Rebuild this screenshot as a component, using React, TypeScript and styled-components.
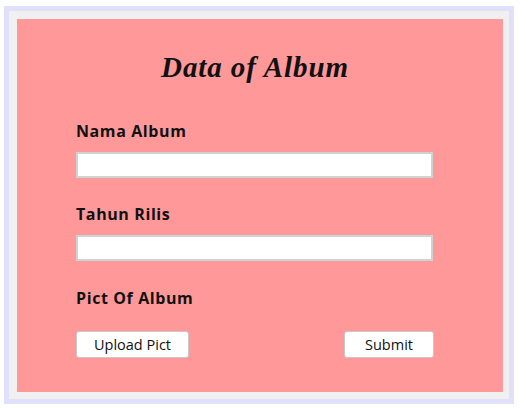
import React from "react";
import styled, { createGlobalStyle } from "styled-components";

const Global = createGlobalStyle`
  html, body { margin: 0; padding: 0; background: #ffffff; }
  body { font-family: "Open Sans", "Noto Sans", sans-serif; }
  * { box-sizing: border-box; }
`;

const Frame = styled.div`
  margin: 6px 7px 4px 4px;
  width: 510px;
  border: 5px solid #e0e0fa;
  background: #f0f0f0;
  padding: 8px 6px 7px 8px;
`;

const Panel = styled.form`
  background: #ff9999;
  height: 373px;
  padding: 32px 69px 0 59px;
  display: flex;
  flex-direction: column;
`;

const Title = styled.h1`
  margin: 0 0 38px 0;
  font-family: "Liberation Serif", "Times New Roman", serif;
  font-style: italic;
  font-weight: bold;
  font-size: 29px;
  line-height: 32px;
  letter-spacing: 0.9px;
  text-align: center;
  color: #111;
`;

const Label = styled.label<{ $gap?: number }>`
  display: block;
  font-weight: bold;
  font-size: 16px;
  line-height: 20px;
  letter-spacing: 0.6px;
  color: #111;
  margin-top: ${(p) => p.$gap ?? 0}px;
`;

const Input = styled.input`
  display: block;
  width: 357px;
  height: 26px;
  margin-top: 11px;
  border: 2px solid #cdd2d2;
  background: #fff;
  outline: none;
`;

const Actions = styled.div`
  display: flex;
  justify-content: space-between;
  width: 358px;
  margin-top: 23px;
`;

const Button = styled.button<{ $w: number }>`
  width: ${(p) => p.$w}px;
  height: 27px;
  background: #fff;
  border: 1px solid #c8c8c8;
  border-radius: 3px;
  font-family: "Open Sans", "Noto Sans", sans-serif;
  font-size: 14.5px;
  color: #111;
  padding: 0;
`;

export default function App() {
  return (
    <>
      <Global />
      <Frame>
        <Panel onSubmit={(e) => e.preventDefault()}>
          <Title>Data of Album</Title>
          <Label>Nama Album</Label>
          <Input type="text" />
          <Label $gap={26}>Tahun Rilis</Label>
          <Input type="text" />
          <Label $gap={27}>Pict Of Album</Label>
          <Actions>
            <Button type="button" $w={113}>Upload Pict</Button>
            <Button type="submit" $w={90}>Submit</Button>
          </Actions>
        </Panel>
      </Frame>
    </>
  );
}
